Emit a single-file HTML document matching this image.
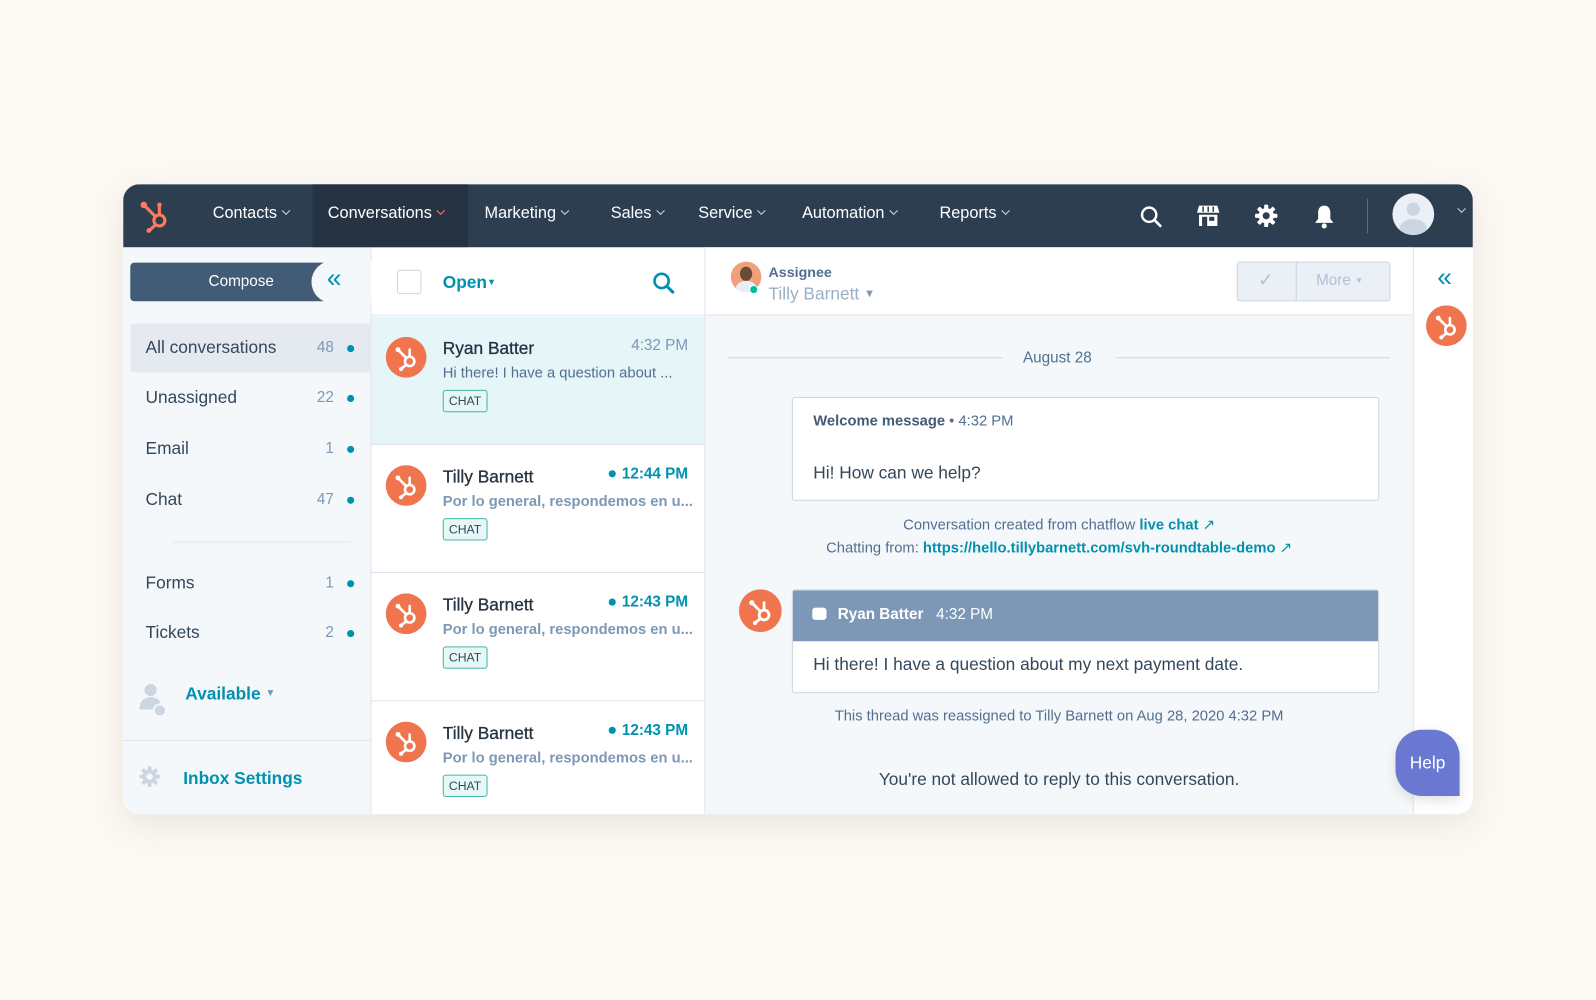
<!DOCTYPE html>
<html><head><meta charset="utf-8"><style>
*{box-sizing:border-box;margin:0;padding:0}
html,body{width:1596px;height:1000px;overflow:hidden;background:#fcf8f3;font-family:"Liberation Sans",sans-serif}
#w{position:absolute;left:0;top:0;width:1568px;height:982px;transform:scale(1.01786);transform-origin:0 0}
.a{position:absolute}
.card{left:121px;top:181px;width:1326px;height:619px;border-radius:16px;overflow:hidden;background:#fff;box-shadow:0 10px 30px rgba(120,100,80,.12)}
.nav{left:0;top:0;width:1326px;height:62px;background:#2d3e50}
.ni{position:absolute;top:20px;color:#fff;font-size:16px;white-space:nowrap}
.ni i{display:inline-block;width:6px;height:6px;border-right:1.4px solid #cbd6e2;border-bottom:1.4px solid #cbd6e2;transform:rotate(45deg);margin-left:6px;position:relative;top:-4px}
.side{left:0;top:62px;width:244px;height:557px;background:#f5f8fa;border-right:1px solid #dfe3eb}
.row{position:absolute;left:7px;width:237px;height:48px;font-size:17px;color:#33475b}
.row span{position:absolute;left:15px;top:14px}
.row b{position:absolute;left:180px;top:15px;font-weight:normal;color:#7c98b6;font-size:15px;width:20px;text-align:right}
.row em{position:absolute;left:213px;top:21px;width:7px;height:7px;border-radius:50%;background:#0091ae}
.list{left:244px;top:62px;width:328px;height:557px;background:#fff;border-right:1px solid #dfe3eb}
.it{position:absolute;left:0;width:327px;height:126px;border-bottom:1px solid #dfe3eb}
.av{position:absolute;width:40px;height:40px}
.nm{position:absolute;left:70px;top:22px;font-size:17px;color:#253342;-webkit-text-stroke:.3px #253342}
.tm{position:absolute;right:16px;top:20px;font-size:15px;color:#7c98b6}
.tm.u{color:#0091ae;font-weight:bold}
.tm.u:before{content:"";display:inline-block;width:7px;height:7px;border-radius:50%;background:#0091ae;margin-right:6px;vertical-align:1px}
.pv{position:absolute;left:70px;top:48px;font-size:14.5px;color:#516f90;white-space:nowrap}
.pv.u{color:#7c98b6;font-weight:bold}
.tg{position:absolute;left:70px;top:72px;font-size:12px;color:#33475b;border:1px solid #45b5a6;background:#e5f8f6;border-radius:3px;padding:3px 5px}
.main{left:572px;top:62px;width:695px;height:557px;background:#f5f8fa}
.rr{left:1267px;top:62px;width:59px;height:557px;background:#fff;border-left:1px solid #dfe3eb}
.c{text-align:center;width:695px;left:0}
.lk{color:#0091ae;font-weight:bold}
</style></head><body><div id="w">
<svg width="0" height="0" style="position:absolute"><defs>
<symbol id="sp" viewBox="0 0 40 40"><circle cx="20" cy="20" r="20" fill="#f0754f"/><g stroke="#fff" stroke-width="2.6" fill="none" stroke-linecap="round"><circle cx="23.5" cy="24" r="4.6"/><path d="M20 20.5L12.5 13M23.5 19.4V12.5M20 27.5L15.5 31"/></g><circle cx="12" cy="12.5" r="2.4" fill="#fff"/><circle cx="15" cy="31.5" r="2" fill="#fff"/></symbol>
</defs></svg>
<div class="a card">
 <div class="a nav">
  <svg class="a" style="left:14px;top:14px" width="36" height="36" viewBox="0 0 40 40"><g stroke="#ff7a59" stroke-width="3.4" fill="none" stroke-linecap="round"><circle cx="24" cy="24" r="6"/><path d="M19.5 19.5L8 8M24 18V9M19.5 29L13 35"/></g><circle cx="7" cy="7" r="3.6" fill="#ff7a59"/><circle cx="24" cy="7" r="2.5" fill="#ff7a59"/><circle cx="12.5" cy="35" r="2.6" fill="#ff7a59"/></svg>
  <div class="a" style="left:186px;top:0;width:153px;height:62px;background:#253342"></div>
  <div class="ni" style="left:88px">Contacts<i></i></div>
  <div class="ni" style="left:201px">Conversations<i style="border-color:#ff7a59"></i></div>
  <div class="ni" style="left:355px">Marketing<i></i></div>
  <div class="ni" style="left:479px">Sales<i></i></div>
  <div class="ni" style="left:565px">Service<i></i></div>
  <div class="ni" style="left:667px">Automation<i></i></div>
  <div class="ni" style="left:802px">Reports<i></i></div>
  <svg class="a" style="left:998px;top:20px" width="24" height="24" viewBox="0 0 24 24"><circle cx="10" cy="10" r="7" stroke="#fff" stroke-width="2.4" fill="none"/><path d="M15 15l6 6" stroke="#fff" stroke-width="2.6" stroke-linecap="round"/></svg>
  <svg class="a" style="left:1054px;top:19px" width="24" height="24" viewBox="0 0 24 24"><path d="M3 2h18l2 7H1z" fill="#fff"/><path d="M7 3v5M12 3v5M17 3v5" stroke="#2d3e50" stroke-width="1.5"/><rect x="3" y="11" width="18" height="11" fill="#fff"/><rect x="6" y="13" width="5" height="9" fill="#2d3e50"/><rect x="13" y="13" width="5" height="4" fill="#2d3e50"/></svg>
  <svg class="a" style="left:1111px;top:19px" width="24" height="24" viewBox="0 0 24 24"><g fill="#fff"><circle cx="12" cy="12" r="7.5"/><rect x="10" y="1" width="4" height="22" rx="1"/><rect x="10" y="1" width="4" height="22" rx="1" transform="rotate(45 12 12)"/><rect x="10" y="1" width="4" height="22" rx="1" transform="rotate(90 12 12)"/><rect x="10" y="1" width="4" height="22" rx="1" transform="rotate(135 12 12)"/></g><circle cx="12" cy="12" r="3.5" fill="#2d3e50"/></svg>
  <svg class="a" style="left:1169px;top:19px" width="22" height="26" viewBox="0 0 22 26"><path d="M11 2c-4 0-6 3-6 7v6l-3 4h18l-3-4V9c0-4-2-7-6-7z" fill="#fff"/><circle cx="11" cy="22" r="2.5" fill="#fff"/></svg>
  <div class="a" style="left:1222px;top:14px;width:1px;height:34px;background:#516f90"></div>
  <div class="a" style="left:1247px;top:9px;width:41px;height:41px;border-radius:50%;background:#eaf0f6;overflow:hidden"><div class="a" style="left:14px;top:9px;width:13px;height:13px;border-radius:50%;background:#cbd6e2"></div><div class="a" style="left:7px;top:25px;width:27px;height:20px;border-radius:50%;background:#cbd6e2"></div></div>
  <div class="ni" style="left:1306px;top:18px"><i style="width:6px;height:6px"></i></div>
 </div>
 <div class="a side">
  <div class="a" style="left:7px;top:15px;width:190px;height:38px;background:#425b76;border-radius:4px 0 0 4px;color:#fff;font-size:15px;text-align:center;line-height:38px;padding-left:28px">Compose</div>
  <div class="a" style="left:185px;top:13px;width:60px;height:42px;border-radius:21px 0 0 21px;background:#f5f8fa"></div>
  <div class="a" style="left:200px;top:15px;color:#0091ae;font-size:26px;line-height:30px">«</div>
  <div class="row" style="top:75px;background:#e5eaf0;border-radius:4px 0 0 4px"><span>All conversations</span><b>48</b><em></em></div>
  <div class="row" style="top:124px"><span>Unassigned</span><b>22</b><em></em></div>
  <div class="row" style="top:174px"><span>Email</span><b>1</b><em></em></div>
  <div class="row" style="top:224px"><span>Chat</span><b>47</b><em></em></div>
  <div class="a" style="left:49px;top:289px;width:175px;height:1px;background:#dfe3eb"></div>
  <div class="row" style="top:306px"><span>Forms</span><b>1</b><em></em></div>
  <div class="row" style="top:355px"><span>Tickets</span><b>2</b><em></em></div>
  <svg class="a" style="left:14px;top:426px" width="32" height="38" viewBox="0 0 32 38"><circle cx="13" cy="9" r="6" fill="#cbd6e2"/><path d="M2 28c0-9 5-12 11-12s11 3 11 12z" fill="#cbd6e2"/><circle cx="22" cy="29" r="6" fill="#cbd6e2" stroke="#f5f8fa" stroke-width="2"/></svg>
  <div class="a" style="left:61px;top:429px;color:#0091ae;font-weight:bold;font-size:17px">Available <span style="font-size:10px;color:#7c98b6;position:relative;top:-3px">▼</span></div>
  <div class="a" style="left:0;top:484px;width:244px;height:1px;background:#dfe3eb"></div>
  <svg class="a" style="left:15px;top:509px" width="22" height="22" viewBox="0 0 24 24"><g fill="#cbd6e2"><circle cx="12" cy="12" r="7.5"/><rect x="10" y="1" width="4" height="22" rx="1"/><rect x="10" y="1" width="4" height="22" rx="1" transform="rotate(45 12 12)"/><rect x="10" y="1" width="4" height="22" rx="1" transform="rotate(90 12 12)"/><rect x="10" y="1" width="4" height="22" rx="1" transform="rotate(135 12 12)"/></g><circle cx="12" cy="12" r="3.5" fill="#f5f8fa"/></svg>
  <div class="a" style="left:59px;top:512px;color:#0091ae;font-weight:bold;font-size:17px">Inbox Settings</div>
 </div>
 <div class="a list">
  <div class="a" style="left:0;top:0;width:327px;height:67px;border-bottom:1px solid #dfe3eb"></div>
  <div class="a" style="left:25px;top:22px;width:24px;height:24px;border:1.5px solid #cbd6e2;border-radius:3px;background:#fff"></div>
  <div class="a" style="left:70px;top:25px;color:#0091ae;font-weight:bold;font-size:17px">Open<span style="font-size:9px;position:relative;top:-3px">▼</span></div>
  <svg class="a" style="left:275px;top:23px" width="24" height="24" viewBox="0 0 24 24"><circle cx="10" cy="10" r="7" stroke="#0091ae" stroke-width="2.6" fill="none"/><path d="M15 15l6 6" stroke="#0091ae" stroke-width="3" stroke-linecap="round"/></svg>
  <div class="it" style="top:68px;background:#e5f5f8"><svg class="av" style="left:14px;top:20px"><use href="#sp"/></svg><div class="nm">Ryan Batter</div><div class="tm">4:32 PM</div><div class="pv">Hi there! I have a question about ...</div><div class="tg">CHAT</div></div>
  <div class="it" style="top:194px"><svg class="av" style="left:14px;top:20px"><use href="#sp"/></svg><div class="nm">Tilly Barnett</div><div class="tm u">12:44 PM</div><div class="pv u">Por lo general, respondemos en u...</div><div class="tg">CHAT</div></div>
  <div class="it" style="top:320px"><svg class="av" style="left:14px;top:20px"><use href="#sp"/></svg><div class="nm">Tilly Barnett</div><div class="tm u">12:43 PM</div><div class="pv u">Por lo general, respondemos en u...</div><div class="tg">CHAT</div></div>
  <div class="it" style="top:446px;border:0"><svg class="av" style="left:14px;top:20px"><use href="#sp"/></svg><div class="nm">Tilly Barnett</div><div class="tm u">12:43 PM</div><div class="pv u">Por lo general, respondemos en u...</div><div class="tg">CHAT</div></div>
 </div>
 <div class="a main">
  <div class="a" style="left:0;top:0;width:695px;height:67px;background:#fff;border-bottom:1px solid #dfe3eb"></div>
  <div class="a" style="left:25px;top:14px;width:30px;height:30px;border-radius:50%;background:#f0a17c;overflow:hidden"><div class="a" style="left:9px;top:5px;width:12px;height:14px;border-radius:50%;background:#6b4a3a"></div><div class="a" style="left:5px;top:19px;width:20px;height:14px;border-radius:50%;background:#e8eef3"></div></div>
  <div class="a" style="left:43px;top:37px;width:9px;height:9px;border-radius:50%;background:#00bda5;border:1.5px solid #fff"></div>
  <div class="a" style="left:62px;top:16px;font-size:14px;font-weight:bold;color:#516f90">Assignee</div>
  <div class="a" style="left:62px;top:36px;font-size:17px;color:#99afc4">Tilly Barnett <span style="font-size:11px;color:#7c98b6;position:relative;top:-2px">▼</span></div>
  <div class="a" style="left:522px;top:14px;width:151px;height:39px;border:1px solid #cbd6e2;border-radius:3px;background:#eaf0f6"></div>
  <div class="a" style="left:580px;top:14px;width:1px;height:39px;background:#cbd6e2"></div>
  <div class="a" style="left:543px;top:22px;color:#b0c1d4;font-size:18px">✓</div>
  <div class="a" style="left:600px;top:24px;color:#b0c1d4;font-size:15px">More <span style="font-size:8px;position:relative;top:-2px">▼</span></div>
  <div class="a" style="left:22px;top:108px;width:270px;height:1px;background:#cbd6e2"></div>
  <div class="a" style="left:403px;top:108px;width:270px;height:1px;background:#cbd6e2"></div>
  <div class="a" style="left:312px;top:100px;font-size:15px;color:#516f90">August 28</div>
  <div class="a" style="left:85px;top:147px;width:577px;height:102px;background:#fff;border:1px solid #cbd6e2;border-radius:3px"></div>
  <div class="a" style="left:106px;top:163px;font-size:14.5px;color:#516f90"><b style="color:#425b76">Welcome message</b> • 4:32 PM</div>
  <div class="a" style="left:106px;top:212px;font-size:17px;color:#33475b">Hi! How can we help?</div>
  <div class="a c" style="top:265px;font-size:14.5px;color:#516f90">Conversation created from chatflow <span class="lk">live chat</span> <span class="lk" style="font-weight:normal">↗</span></div>
  <div class="a c" style="top:288px;font-size:14.5px;color:#516f90">Chatting from: <span class="lk">https://hello.tillybarnett.com/svh-roundtable-demo</span> <span class="lk" style="font-weight:normal">↗</span></div>
  <svg class="av" style="left:33px;top:336px;width:42px;height:42px" viewBox="0 0 40 40"><use href="#sp"/></svg>
  <div class="a" style="left:85px;top:336px;width:577px;height:102px;background:#fff;border:1px solid #cbd6e2;border-radius:3px;overflow:hidden"><div style="height:50px;background:#7c98b6"></div></div>
  <div class="a" style="left:105px;top:354px;width:14px;height:12px;border-radius:3px;background:#fff"></div>
  <div class="a" style="left:130px;top:352px;font-size:15px;color:#fff"><b>Ryan Batter</b>&nbsp;&nbsp; 4:32 PM</div>
  <div class="a" style="left:106px;top:400px;font-size:17px;color:#33475b">Hi there! I have a question about my next payment date.</div>
  <div class="a c" style="top:453px;font-size:14.5px;color:#516f90">This thread was reassigned to Tilly Barnett on Aug 28, 2020 4:32 PM</div>
  <div class="a c" style="top:513px;font-size:17px;color:#33475b">You're not allowed to reply to this conversation.</div>
 </div>
 <div class="a rr">
  <div class="a" style="left:23px;top:14px;color:#0091ae;font-size:26px;line-height:30px">«</div>
  <svg class="av" style="left:12px;top:57px;width:40px;height:40px" viewBox="0 0 40 40"><use href="#sp"/></svg>
 </div>
</div>
<div class="a" style="left:1371px;top:717px;width:63px;height:65px;background:#6a78d1;border-radius:26px 26px 0 26px;color:#fff;font-size:17px;text-align:center;line-height:65px;box-shadow:0 4px 12px rgba(0,0,0,.12)">Help</div>
</div></body></html>
